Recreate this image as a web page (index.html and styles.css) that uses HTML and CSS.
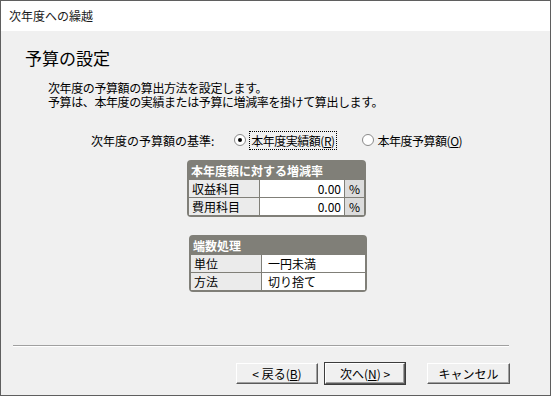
FILE: index.html
```html
<!DOCTYPE html>
<html lang="ja">
<head>
  <meta charset="UTF-8">
  <meta name="viewport" content="width=device-width, initial-scale=1.0">
  <title>次年度への繰越</title>
  <link rel="stylesheet" href="styles.css">
</head>
<body>
  <div class="window">
    <div class="titlebar">次年度への繰越</div>
    <div class="content">
      <h1 class="heading">予算の設定</h1>
      <p class="desc">次年度の予算額の算出方法を設定します。<br>予算は、本年度の実績または予算に増減率を掛けて算出します。</p>

      <div class="basis">
        <span class="basisLabel">次年度の予算額の基準:</span>
        <label class="radio checked"><span class="dot"></span><span class="focus">本年度実績額(<u>R</u>)</span></label>
        <label class="radio"><span class="dot"></span><span>本年度予算額(<u>O</u>)</span></label>
      </div>

      <div class="panel rate">
        <div class="panelHead">本年度額に対する増減率</div>
        <div class="cell name">収益科目</div>
        <div class="cell num">0.00</div>
        <div class="cell unit">%</div>
        <div class="cell name">費用科目</div>
        <div class="cell num">0.00</div>
        <div class="cell unit">%</div>
      </div>

      <div class="panel rounding">
        <div class="panelHead">端数処理</div>
        <div class="cell name">単位</div>
        <div class="cell val">一円未満</div>
        <div class="cell name">方法</div>
        <div class="cell val">切り捨て</div>
      </div>

      <div class="separator"></div>

      <div class="buttons">
        <button class="btn">&lt; 戻る(<u>B</u>)</button>
        <button class="btn default">次へ(<u>N</u>) &gt;</button>
        <button class="btn cancel">キャンセル</button>
      </div>
    </div>
  </div>
</body>
</html>
```

FILE: styles.css
```css
body {
  margin: 0;
  font-family: "Noto Sans CJK JP", "Noto Sans", sans-serif;
  font-size: 12px;
  color: #000;
}
.window {
  width: 551px;
  height: 396px;
  box-sizing: border-box;
  border: 1px solid #5f5f5f;
  background: #f0f0f0;
  display: flex;
  flex-direction: column;
}
.titlebar {
  height: 30px;
  line-height: 30px;
  padding-left: 8px;
  background: #fff;
  color: #1a1a1a;
}
.content {
  flex: 1;
  display: flex;
  flex-direction: column;
}
.heading {
  margin: 16px 0 0 24px;
  font-size: 17px;
  font-weight: normal;
  line-height: 22px;
}
.desc {
  margin: 13px 0 0 47px;
  font-family: "Liberation Sans", "Noto Sans CJK JP", sans-serif;
  line-height: 14px;
  letter-spacing: -0.4px;
}
.basis {
  display: flex;
  align-items: center;
  margin: 22px 0 0 90px;
  height: 16px;
}
.basisLabel {
  margin-right: 20px;
}
.radio {
  display: flex;
  align-items: center;
  margin-right: 26px;
  letter-spacing: -0.5px;
}
.radio .dot {
  width: 10px;
  height: 10px;
  border: 1px solid #8a8a8a;
  border-radius: 50%;
  background: #fff;
  margin-right: 4px;
  position: relative;
}
.radio.checked .dot::after {
  content: "";
  position: absolute;
  left: 3px;
  top: 3px;
  width: 4px;
  height: 4px;
  border-radius: 50%;
  background: #000;
}
.focus {
  outline: 1px dotted #000;
  padding: 0 1px;
}
.panel {
  display: grid;
  gap: 1px;
  box-sizing: border-box;
  width: 179px;
  border: 2px solid #807f78;
  border-radius: 4px;
  background: #807f78;
}
.rate {
  margin: 12px 0 0 186px;
  grid-template-columns: 70px 84px 1fr;
}
.rounding {
  margin: 18px 0 0 188px;
  width: 178px;
  grid-template-columns: 70px 1fr;
}
.panelHead {
  grid-column: 1 / -1;
  height: 17px;
  line-height: 17px;
  padding-left: 2px;
  color: #fff;
  font-weight: bold;
}
.cell {
  height: 17px;
  line-height: 17px;
  padding: 0 3px;
}
.name {
  background: #ebebeb;
}
.num {
  background: #fff;
  text-align: right;
}
.val {
  background: #fff;
  padding-left: 6px;
}
.unit {
  background: #dcdcdc;
  text-align: center;
  padding: 0;
}
.separator {
  margin: 53px 41px 0 12px;
  border-top: 1px solid #a0a0a0;
  border-bottom: 1px solid #fff;
}
.buttons {
  display: flex;
  justify-content: flex-end;
  margin: 16px 40px 0 0;
}
.btn {
  width: 82px;
  height: 21px;
  padding: 0;
  font: inherit;
  background: #f0f0f0;
  border: 1px solid;
  border-color: #fff #5a5a5a #5a5a5a #fff;
  box-shadow: inset -1px -1px #a0a0a0;
  margin-left: 7px;
}
.btn.default {
  outline: 1px solid #3c3c3c;
  outline-offset: 0;
  width: 80px;
}
.btn.cancel {
  margin-left: 22px;
  width: 83px;
}
```
